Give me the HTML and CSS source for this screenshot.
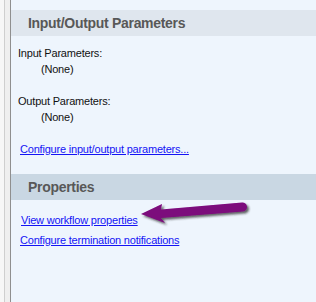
FILE: index.html
```html
<!DOCTYPE html>
<html lang="en">
<head>
    <meta charset="UTF-8">
    <title>Workflow Settings</title>
    <link rel="stylesheet" href="styles.css">
</head>
<body>

    <div class="window">
        <!-- Left gutter -->
        <div class="gutter"></div>

        <!-- Task panel -->
        <div class="panel">
            <div class="section-title">Input/Output Parameters</div>
            <div class="section-body">
                <div class="label">Input Parameters:</div>
                <div class="value">(None)</div>
                <div class="label spaced">Output Parameters:</div>
                <div class="value">(None)</div>
                <a class="link spaced" href="#">Configure input/output parameters...</a>
            </div>

            <div class="section-title dark">Properties</div>
            <div class="section-body links">
                <a class="link first" href="#">View workflow properties</a>
                <a class="link" href="#">Configure termination notifications</a>
            </div>
        </div>

        <!-- Callout arrow -->
        <svg class="arrow" width="316" height="302" viewBox="0 0 316 302">
            <defs>
                <filter id="shadow" x="-20%" y="-50%" width="140%" height="200%">
                    <feDropShadow dx="2" dy="2" stdDeviation="1.2" flood-color="#222" flood-opacity="0.7"/>
                </filter>
            </defs>
            <path d="M141,214 L162,204 L161,209.5 L242,202.5 A4.5,4.5 0 0 1 243,211.5 L161,218 L165,223 Z"
                  fill="#7b087b" filter="url(#shadow)"/>
        </svg>
    </div>

</body>
</html>
```

FILE: styles.css
```css
body {
    margin: 0;
    padding: 0;
    font-family: 'Liberation Sans', Arial, sans-serif;
    background-color: #eef5fd;
}
.window {
    position: relative;
    display: flex;
    width: 316px;
    height: 302px;
    overflow: hidden;
}
.gutter {
    width: 4px;
    border-right: 1px solid #cfcfcf;
    background-color: #f7f7f7;
    box-shadow: 5px 0 0 #efefef;
    margin-right: 5px;
    flex-shrink: 0;
}
.panel {
    flex: 1;
    border-left: 1px solid #8f8f8f;
    background-color: #eef5fd;
    padding-top: 10px;
}
.section-title {
    height: 26px;
    line-height: 26px;
    padding-left: 17px;
    background-color: #dfe6ee;
    color: #585858;
    font-size: 14px;
    font-weight: bold;
    letter-spacing: -0.3px;
}
.section-title.dark {
    background-color: #c9d7e3;
}
.section-body {
    display: flex;
    flex-direction: column;
    align-items: flex-start;
    padding: 9px 0 17px 7px;
    font-size: 11px;
    letter-spacing: -0.2px;
    line-height: 16px;
    color: #111;
}
.section-body.links {
    padding-top: 10px;
    line-height: 20px;
}
.value {
    padding-left: 23px;
}
.spaced {
    margin-top: 16px;
}
.link {
    color: #1414f5;
    text-decoration: underline;
    padding-left: 2px;
}
.link.first {
    padding-left: 3px;
}
.arrow {
    position: absolute;
    left: 0;
    top: 0;
    pointer-events: none;
}
```
